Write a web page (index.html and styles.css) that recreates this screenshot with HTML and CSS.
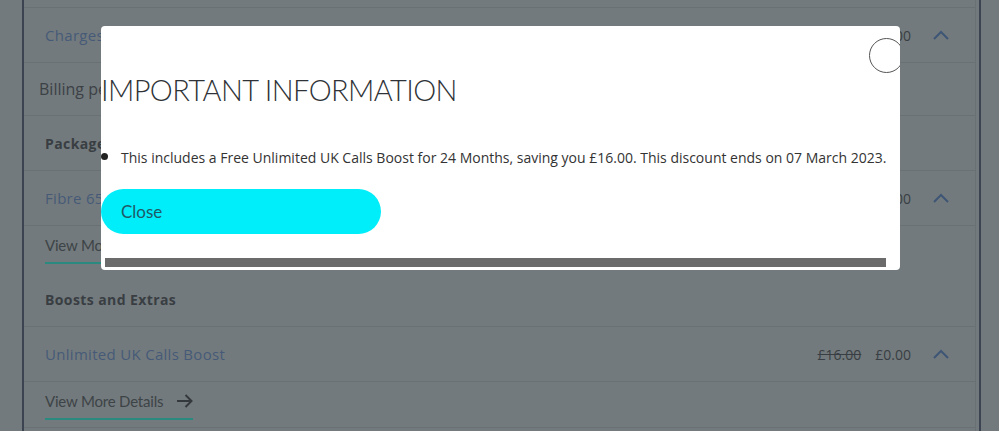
FILE: index.html
```html
<!DOCTYPE html>
<html lang="en">
<head>
    <meta charset="UTF-8">
    <meta name="viewport" content="width=device-width, initial-scale=1.0">
    <title>Order Summary</title>
    <link rel="stylesheet" href="styles.css">
</head>
<body>
    <div class="panel">
        <div class="rows">
            <div class="row spacer"></div>
            <div class="row item">
                <span class="item-name">Charges</span>
                <span class="prices"><span class="price">£0.00</span></span>
                <span class="chevron"><svg width="16" height="10" viewBox="0 0 16 10"><path d="M1 9 L8 2 L15 9" fill="none" stroke="currentColor" stroke-width="2"/></svg></span>
            </div>
            <div class="row plain">
                <span>Billing period</span>
            </div>
            <div class="row heading">Package</div>
            <div class="row item">
                <span class="item-name">Fibre 65</span>
                <span class="prices"><span class="price">£0.00</span></span>
                <span class="chevron"><svg width="16" height="10" viewBox="0 0 16 10"><path d="M1 9 L8 2 L15 9" fill="none" stroke="currentColor" stroke-width="2"/></svg></span>
            </div>
            <div class="row more no-line">
                <a class="more-link" href="#">View More Details
                    <svg width="17" height="14" viewBox="0 0 17 14"><path d="M1 7 H15.5 M9.5 1 L15.5 7 L9.5 13" fill="none" stroke="currentColor" stroke-width="2"/></svg>
                </a>
            </div>
            <div class="row heading">Boosts and Extras</div>
            <div class="row item">
                <span class="item-name">Unlimited UK Calls Boost</span>
                <span class="prices"><span class="price old">£16.00</span><span class="price">£0.00</span></span>
                <span class="chevron"><svg width="16" height="10" viewBox="0 0 16 10"><path d="M1 9 L8 2 L15 9" fill="none" stroke="currentColor" stroke-width="2"/></svg></span>
            </div>
            <div class="row more">
                <a class="more-link" href="#">View More Details
                    <svg width="17" height="14" viewBox="0 0 17 14"><path d="M1 7 H15.5 M9.5 1 L15.5 7 L9.5 13" fill="none" stroke="currentColor" stroke-width="2"/></svg>
                </a>
            </div>
            <div class="row item"></div>
        </div>
    </div>

    <div class="modal">
        <button class="modal-x" aria-label="Close"></button>
        <h2 class="modal-title">IMPORTANT INFORMATION</h2>
        <ul class="modal-list">
            <li>This includes a Free Unlimited UK Calls Boost for 24 Months, saving you £16.00. This discount ends on 07 March 2023.</li>
        </ul>
        <button class="close-btn">Close</button>
        <div class="scrollbar"></div>
    </div>
</body>
</html>
```

FILE: styles.css
```css
:root {
    --page-bg: #737a7d;
    --edge-color: #3b4450;
    --line-color: #6a7174;
    --blue-text: #465a78;
    --dark-text: #3a4045;
    --teal: #2a8a80;
}

* {
    box-sizing: border-box;
    margin: 0;
    padding: 0;
}

body {
    font-family: 'Open Sans', 'Liberation Sans', sans-serif;
    background-color: var(--page-bg);
    color: var(--dark-text);
    height: 431px;
    overflow: hidden;
}

.panel {
    margin-left: 22px;
    width: 959px;
    border-left: 2px solid var(--edge-color);
    border-right: 2px solid var(--edge-color);
    padding-right: 3px;
}

.rows {
    border-right: 1px solid var(--line-color);
}

.row {
    display: flex;
    align-items: center;
    height: 55px;
    padding: 0 21px;
    border-bottom: 1px solid var(--line-color);
}

.row.spacer {
    height: 8px;
}

.row.no-line {
    border-bottom: none;
}

.item-name {
    flex: 1;
    font-size: 15px;
    letter-spacing: 0.3px;
    color: var(--blue-text);
}

.prices {
    display: flex;
    gap: 14px;
    font-size: 14px;
    color: #383e43;
}

.price.old {
    text-decoration: line-through;
}

.chevron {
    display: flex;
    margin-left: 22px;
    margin-right: 5px;
    color: #3e5676;
}

.row.plain {
    height: 53px;
    padding-left: 15px;
    font-size: 16px;
    color: #3c4146;
}

.row.heading {
    font-size: 14px;
    font-weight: 700;
    letter-spacing: 0.4px;
    color: #393e43;
}

.row.more {
    height: 46px;
    align-items: flex-start;
    padding-top: 10px;
}

.more-link {
    display: inline-flex;
    align-items: center;
    gap: 13px;
    padding-bottom: 8px;
    border-bottom: 2px solid var(--teal);
    font-family: 'Lato', sans-serif;
    font-size: 15px;
    letter-spacing: -0.2px;
    color: #3d4447;
    text-decoration: none;
}

.more-link svg {
    color: #34393d;
}

/* modal */
.modal {
    position: absolute;
    left: 101px;
    top: 26px;
    width: 799px;
    height: 244px;
    background: white;
    border-radius: 4px;
    overflow: hidden;
}

.modal-x {
    position: absolute;
    left: 768px;
    top: 12px;
    width: 35px;
    height: 35px;
    border: 1px solid #555;
    border-radius: 50%;
    background: white;
}

.modal-title {
    margin-top: 46px;
    font-family: 'Lato', sans-serif;
    font-weight: 300;
    font-size: 29px;
    line-height: 36px;
    letter-spacing: -0.6px;
    color: #2f3337;
}

.modal-list {
    margin-top: 38px;
    padding-left: 20px;
    font-size: 14px;
    line-height: 20px;
    color: #333;
}

.modal-list li::marker {
    font-size: 19px;
    color: #222;
}

.close-btn {
    display: block;
    margin-top: 21px;
    width: 280px;
    height: 45px;
    padding-left: 20px;
    border: none;
    border-radius: 23px;
    background: #00edfa;
    font-family: 'Lato', sans-serif;
    font-size: 17px;
    text-align: left;
    color: #1f5a66;
}

.scrollbar {
    margin: 24px 0 0 4px;
    width: 781px;
    height: 9px;
    background: #6b6b6b;
}
```
